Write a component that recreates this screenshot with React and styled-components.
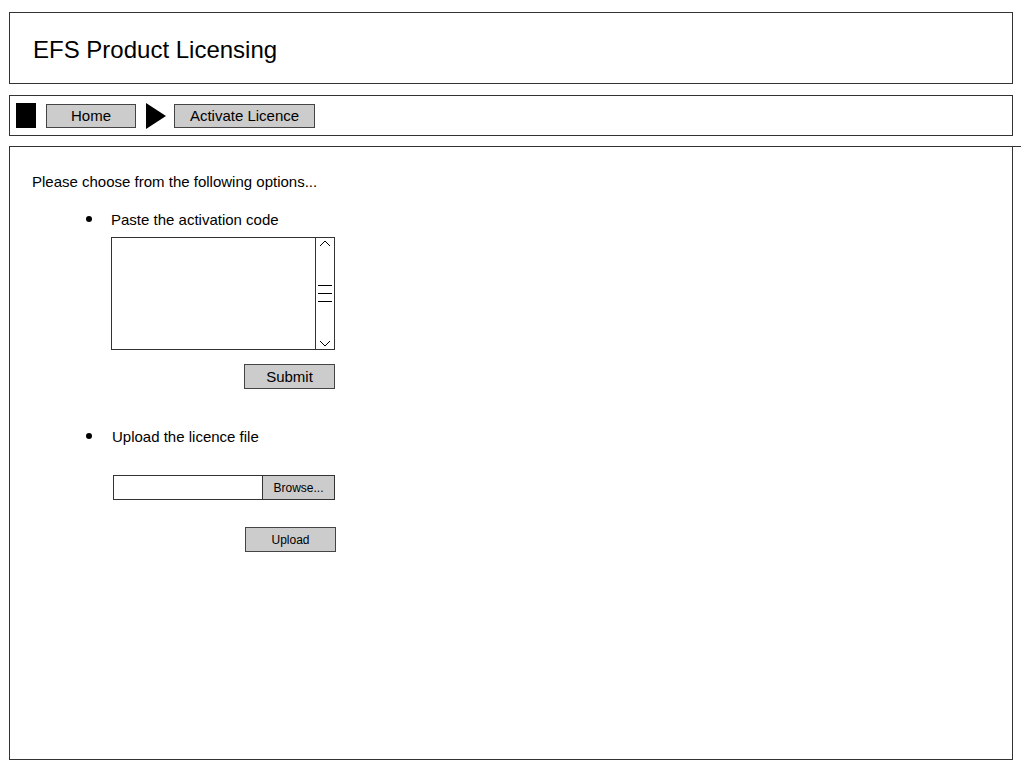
import styled, { createGlobalStyle } from "styled-components";

const Global = createGlobalStyle`
  html, body {
    margin: 0;
    padding: 0;
    background: #ffffff;
  }
  body {
    font-family: "Comic Sans MS", "Liberation Sans", "DejaVu Sans", sans-serif;
    color: #000;
  }
`;

export default function App() {
  return (
    <>
      <Global />
      <Page>
        <Header>
          <Title>EFS Product Licensing</Title>
        </Header>

        <Crumbs>
          <Block />
          <CrumbButton $w={90}>Home</CrumbButton>
          <Arrow viewBox="0 0 20 26">
            <polygon points="0,0 20,13 0,26" fill="#000" />
          </Arrow>
          <CrumbButton $w={141} $pull={2}>Activate Licence</CrumbButton>
        </Crumbs>

        <Main>
          <Intro>Please choose from the following options...</Intro>

          <Option>
            <Bullet />
            <OptionLabel>Paste the activation code</OptionLabel>
          </Option>
          <Widget>
            <CodeBox>
              <CodeArea />
              <Scroll>
                <svg width="14" height="10" viewBox="0 0 14 10">
                  <polyline points="2,7 7,2 12,7" fill="none" stroke="#000" strokeWidth="1" />
                </svg>
                <Grip>
                  <span />
                  <span />
                  <span />
                </Grip>
                <svg width="14" height="10" viewBox="0 0 14 10">
                  <polyline points="2,3 7,8 12,3" fill="none" stroke="#000" strokeWidth="1" />
                </svg>
              </Scroll>
            </CodeBox>
            <ActionButton $w={91} $size={15} $top={14}>Submit</ActionButton>
          </Widget>

          <Option $top={38}>
            <Bullet />
            <OptionLabel $shift={1}>Upload the licence file</OptionLabel>
          </Option>
          <Widget $shift={2}>
            <FileRow>
              <FileField />
              <BrowseButton>Browse...</BrowseButton>
            </FileRow>
            <ActionButton $w={91} $size={12} $top={27} $nudge={-1}>Upload</ActionButton>
          </Widget>
        </Main>
      </Page>
    </>
  );
}

const Page = styled.div`
  display: flex;
  flex-direction: column;
  padding: 12px 11px 0 9px;
  width: 1024px;
  box-sizing: border-box;
`;

const Header = styled.div`
  height: 72px;
  box-sizing: border-box;
  border: 1px solid #333;
  display: flex;
  align-items: center;
  padding: 3px 0 0 23px;
`;

const Title = styled.h1`
  margin: 0;
  font-size: 24px;
  font-weight: normal;
  line-height: 1;
`;

const Crumbs = styled.div`
  margin-top: 11px;
  height: 41px;
  box-sizing: border-box;
  border: 1px solid #333;
  display: flex;
  align-items: center;
  padding-left: 6px;
  gap: 10px;
`;

const Block = styled.div`
  width: 20px;
  height: 25px;
  background: #000;
`;

const CrumbButton = styled.div`
  width: ${({ $w }) => $w}px;
  margin-left: ${({ $pull }) => -($pull ?? 0)}px;
  height: 24px;
  box-sizing: border-box;
  border: 1px solid #444;
  background: #cccccc;
  font-size: 15px;
  display: flex;
  align-items: center;
  justify-content: center;
`;

const Arrow = styled.svg`
  width: 20px;
  height: 26px;
`;

const Main = styled.div`
  position: relative;
  margin-top: 10px;
  height: 614px;
  box-sizing: border-box;
  border: 1px solid #333;
  padding: 25px 0 0 22px;
  display: flex;
  flex-direction: column;

  &::after {
    content: "";
    position: absolute;
    top: -1px;
    right: -9px;
    width: 9px;
    height: 1px;
    background: #333;
  }
`;

const Intro = styled.p`
  margin: 0;
  font-size: 15px;
  line-height: 20px;
`;

const Option = styled.div`
  margin-top: ${({ $top }) => $top ?? 18}px;
  display: flex;
  align-items: center;
  padding-left: 54px;
`;

const Bullet = styled.span`
  width: 6px;
  height: 6px;
  border-radius: 50%;
  background: #000;
  margin-right: 19px;
  margin-top: -3px;
`;

const OptionLabel = styled.span`
  font-size: 15px;
  line-height: 20px;
  margin-left: ${({ $shift }) => $shift ?? 0}px;
`;

const Widget = styled.div`
  margin-left: ${({ $shift }) => 79 + ($shift ?? 0)}px;
  width: 224px;
  display: flex;
  flex-direction: column;
`;

const CodeBox = styled.div`
  margin-top: 7px;
  height: 113px;
  box-sizing: border-box;
  border: 1px solid #333;
  display: flex;
`;

const CodeArea = styled.div`
  flex: 1;
  background: #fff;
`;

const Scroll = styled.div`
  width: 18px;
  border-left: 1px solid #333;
  display: flex;
  flex-direction: column;
  align-items: center;
  justify-content: space-between;
  padding: 1px 0;
`;

const Grip = styled.div`
  display: flex;
  flex-direction: column;
  gap: 7px;
  width: 100%;

  span {
    display: block;
    height: 1px;
    background: #000;
    margin: 0 2px;
  }
`;

const ActionButton = styled.div`
  align-self: flex-end;
  margin-top: ${({ $top }) => $top}px;
  margin-right: ${({ $nudge }) => -($nudge ?? 0)}px;
  width: ${({ $w }) => $w}px;
  height: 25px;
  box-sizing: border-box;
  border: 1px solid #444;
  background: #cccccc;
  font-size: ${({ $size }) => $size}px;
  display: flex;
  align-items: center;
  justify-content: center;
`;

const FileRow = styled.div`
  margin-top: 28px;
  height: 25px;
  display: flex;
  box-sizing: border-box;
  border: 1px solid #333;
  width: 222px;
`;

const FileField = styled.div`
  flex: 1;
  background: #fff;
`;

const BrowseButton = styled.div`
  width: 71px;
  border-left: 1px solid #333;
  background: #cccccc;
  font-size: 12px;
  display: flex;
  align-items: center;
  justify-content: center;
`;
